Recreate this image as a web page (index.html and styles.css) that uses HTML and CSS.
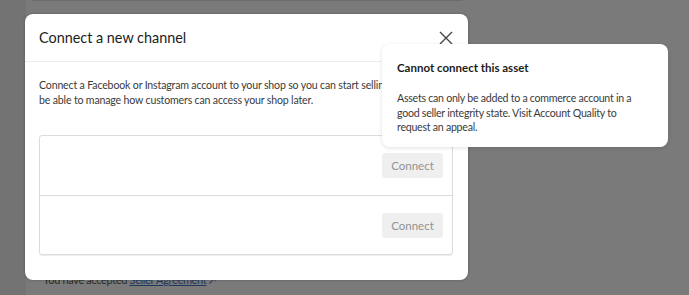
FILE: index.html
```html
<!DOCTYPE html>
<html lang="en">
<head>
<meta charset="utf-8">
<title>Connect a new channel</title>
<link rel="stylesheet" href="styles.css">
</head>
<body>
<div class="page">
  <div class="side"></div>
  <div class="main">
    <div class="card-top"></div>
    <p class="accepted">You have accepted <a class="link">Seller Agreement</a> <span class="ext">&#x2197;</span></p>
  </div>
</div>

<div class="modal">
  <div class="modal-head">
    <h2 class="modal-title">Connect a new channel</h2>
    <button class="close" aria-label="Close">
      <svg width="14" height="14" viewBox="0 0 14 14"><path d="M1 1L13 13M13 1L1 13" stroke="#444" stroke-width="1.4" fill="none"/></svg>
    </button>
  </div>
  <div class="modal-body">
    <p class="desc">Connect a Facebook or Instagram account to your shop so you can start selling. You'll<br>be able to manage how customers can access your shop later.</p>
    <div class="list">
      <div class="row"><div class="row-info"></div><button class="btn">Connect</button></div>
      <div class="row"><div class="row-info"></div><button class="btn">Connect</button></div>
    </div>
  </div>
</div>

<div class="tooltip">
  <div class="tip-title">Cannot connect this asset</div>
  <p class="tip-text">Assets can only be added to a commerce account in a good seller integrity state. Visit Account Quality to request an appeal.</p>
</div>
</body>
</html>
```

FILE: styles.css
```css
* { box-sizing: border-box; }
html, body { margin: 0; padding: 0; }
body {
  width: 689px;
  height: 295px;
  overflow: hidden;
  background: #7a7a7a;
  font-family: Lato, "Open Sans", sans-serif;
  position: relative;
}
.page {
  display: flex;
  height: 295px;
}
.side {
  width: 26px;
  background: #737373;
  flex: none;
}
.main {
  width: 440px;
  display: flex;
  flex-direction: column;
  justify-content: space-between;
  margin-left: 1px;
}
.card-top {
  height: 11px;
  margin-top: -10px;
  border: 1px solid #6c6c6c;
  border-top: none;
  border-radius: 0 0 7px 7px;
  background: #797979;
}
.accepted {
  margin: 0 0 9px 16px;
  font-size: 11px;
  letter-spacing: -0.35px;
  color: #2c2c2c;
}
.link { color: #22395e; text-decoration: underline; }
.ext { color: #22395e; font-size: 10px; }

.modal {
  position: absolute;
  left: 25px;
  top: 14px;
  width: 443px;
  height: 266px;
  background: #fff;
  border-radius: 8px;
  box-shadow: 0 0 3px rgba(0,0,0,0.25);
}
.modal-head {
  height: 48px;
  display: flex;
  align-items: center;
  justify-content: space-between;
  padding: 0 14px 0 14px;
  border-bottom: 1px solid #ececec;
}
.modal-title {
  margin: 0;
  font-size: 14.4px;
  font-weight: 400;
  color: #1c1c1c;
}
.close {
  border: 0;
  background: none;
  padding: 0;
  width: 14px;
  height: 14px;
  margin-right: 1px;
  display: flex;
}
.modal-body {
  padding: 16px 14px 0 14px;
}
.desc {
  margin: 0;
  font-size: 10.6px;
  letter-spacing: -0.17px;
  line-height: 14.5px;
  color: #3a3a3a;
  white-space: nowrap;
  height: 30px;
}
.list {
  margin-top: 27px;
  width: 414px;
  border: 1px solid #dcdcdc;
  border-radius: 3px;
  box-shadow: 0 1px 1px rgba(0,0,0,0.08);
}
.row {
  height: 59px;
  display: flex;
  align-items: center;
  justify-content: space-between;
  padding: 0 9px 0 12px;
}
.row + .row { border-top: 1px solid #dcdcdc; }
.btn {
  width: 61px;
  height: 25px;
  border: 0;
  border-radius: 3px;
  background: #efefef;
  color: #929292;
  font-family: inherit;
  font-size: 11.5px;
  padding: 0;
}

.tooltip {
  position: absolute;
  left: 382px;
  top: 44px;
  width: 286px;
  height: 103px;
  background: #fff;
  border-radius: 8px;
  box-shadow: 0 1px 4px rgba(0,0,0,0.12);
  padding: 16px 26px 0 15px;
}
.tip-title {
  font-size: 11.5px;
  font-weight: 700;
  color: #1c1c1c;
  line-height: 16px;
}
.tip-text {
  margin: 15px 0 0 0;
  font-size: 10.6px;
  letter-spacing: -0.25px;
  line-height: 14.5px;
  color: #3a3a3a;
}
```
